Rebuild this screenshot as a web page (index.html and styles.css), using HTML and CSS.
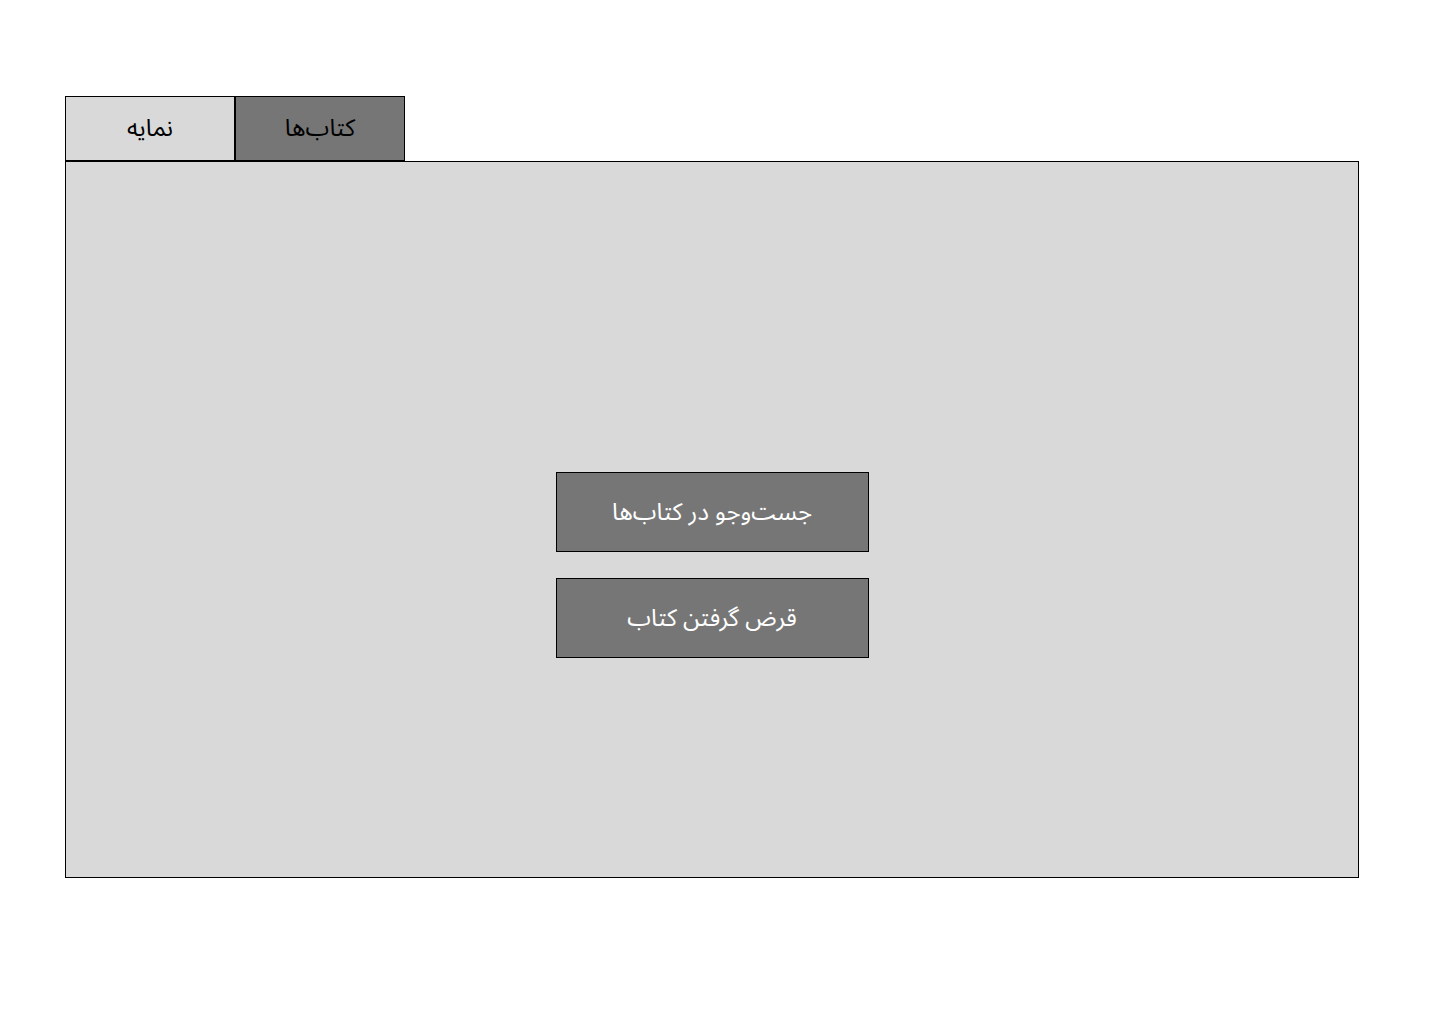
FILE: index.html
```html
<!DOCTYPE html>
<html lang="fa">
<head>
<meta charset="utf-8">
<link rel="stylesheet" href="styles.css">
</head>
<body>
<div class="page">
  <div class="tabs">
    <div class="tab tab-light">نمایه</div>
    <div class="tab tab-dark">کتاب‌ها</div>
  </div>
  <div class="panel">
    <div class="btn">جست‌وجو در کتاب‌ها</div>
    <div class="btn">قرض گرفتن کتاب</div>
  </div>
</div>
</body>
</html>
```
FILE: styles.css
```css
html, body {
  margin: 0;
  padding: 0;
  background: #ffffff;
}
body {
  font-family: "Noto Sans Arabic UI", "Noto Sans Arabic", "Noto Sans", "DejaVu Sans", sans-serif;
}
.page {
  padding: 96px 0 0 65px;
  width: 1294px;
}
.tabs {
  display: flex;
}
.tab {
  box-sizing: border-box;
  width: 170px;
  height: 65px;
  border: 1px solid #000;
  display: flex;
  align-items: center;
  justify-content: center;
  font-size: 24px;
  color: #000;
  direction: rtl;
  padding-bottom: 4px;
}
.tab-light { background: #d9d9d9; }
.tab-dark { background: #767676; }
.panel {
  box-sizing: border-box;
  height: 717px;
  border: 1px solid #000;
  background: #d9d9d9;
  display: flex;
  flex-direction: column;
  align-items: center;
  padding-top: 310px;
  gap: 26px;
}
.btn {
  box-sizing: border-box;
  width: 313px;
  height: 80px;
  background: #767676;
  border: 1px solid #000;
  color: #fff;
  font-size: 24px;
  display: flex;
  align-items: center;
  justify-content: center;
  direction: rtl;
  padding-bottom: 4px;
}
```
